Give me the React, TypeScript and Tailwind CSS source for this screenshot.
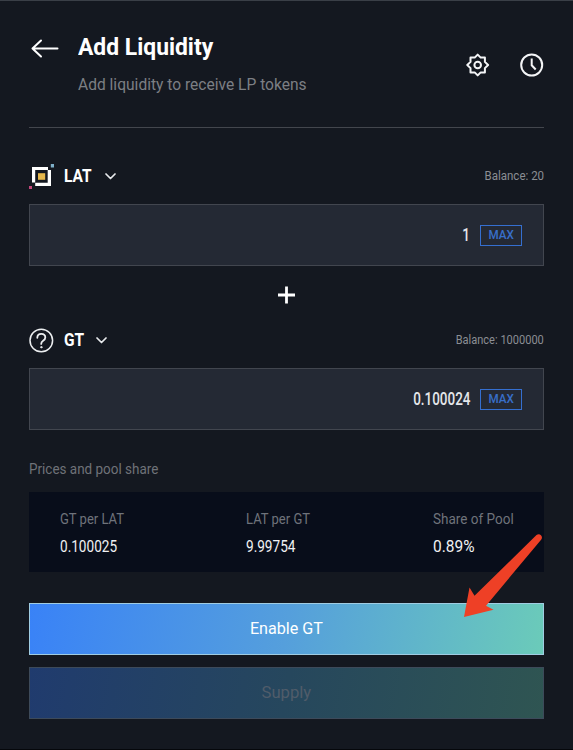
import React from "react";

function ArrowLeft() {
  return (
    <svg className="mt-[38px] h-[20px] w-[28px] shrink-0" viewBox="0 0 28 20" fill="none" stroke="#fff" strokeWidth="2" strokeLinecap="round" strokeLinejoin="round">
      <path d="M26.500 9.500H1.500M10 1.500l-8.500 8 8.500 8" />
    </svg>
  );
}

function Gear() {
  return (
    <svg className="h-6 w-6" viewBox="0 0 24 24" fill="none" stroke="#f4f5f7" strokeWidth="2" strokeLinejoin="round">
      <path d="M11.700 1.600l3 3h4.200v4.300l3.200 3.100-3.200 3.100v4.300h-4.200l-3 3-3-3H4.500v-4.300L1.300 12l3.200-3.100V4.600h4.200z" />
      <circle cx="11.700" cy="12" r="3.300" />
    </svg>
  );
}

function Clock() {
  return (
    <svg className="h-6 w-6" viewBox="0 0 24 24" fill="none" stroke="#f4f5f7" strokeWidth="2">
      <circle cx="11.700" cy="12" r="10.500" />
      <path d="M11.700 5.500v6.800l4 4.200" />
    </svg>
  );
}

function LatLogo() {
  return (
    <svg className="-mt-px h-[26px] w-[27px] shrink-0" viewBox="0 0.5 27 26">
      <path d="M3 4.500h16v3H6.200v12.500H3z" fill="#fff" />
      <path d="M22 7.500V23.500H6.200V20.300h12.500V7.500z" fill="#fff" />
      <path d="M9 10.700h7.200v6.600H9z" fill="#e6b84c" />
      <path d="M21.800 1.500h3.200v3.500h-3.200z" fill="#7fb0c9" />
      <path d="M0 23.500h3v3H0z" fill="#c3477b" />
    </svg>
  );
}

function QuestionLogo() {
  return (
    <svg className="h-[27px] w-[27px] shrink-0" viewBox="0 0 27 27" fill="none" stroke="#eceef0" strokeWidth="1.500" strokeLinecap="round">
      <circle cx="12.300" cy="13.500" r="11.300" />
      <path d="M8.300 10.800c0-2.300 1.700-3.900 4-3.900s4 1.500 4 3.600c0 1.700-1 2.500-2.200 3.300-1.200.8-1.900 1.500-1.900 3.100" strokeWidth="1.800" />
      <circle cx="12.300" cy="20.200" r=".7" fill="#eceef0" strokeWidth="1" />
    </svg>
  );
}

function Chevron() {
  return (
    <svg className="h-[7px] w-[11px]" viewBox="0 0 11 7" fill="none" stroke="#e8eaed" strokeWidth="1.700" strokeLinecap="round" strokeLinejoin="round">
      <path d="M1 1l4.500 4.500L10 1" />
    </svg>
  );
}

type TokenProps = { logo: React.ReactNode; symbol: string; symbolClass: string; balance: string; balanceClass: string };

function TokenRow({ logo, symbol, symbolClass, balance, balanceClass }: TokenProps) {
  return (
    <div className="flex h-[26px] items-center justify-between">
      <div className="flex items-center">
        {logo}
        <span className={"ml-[8px] text-[18px] leading-[26px] font-bold text-white " + symbolClass}>
          <span className="inline-block origin-left scale-x-[0.86]">{symbol}</span>
        </span>
        <Chevron />
      </div>
      <span className={"origin-right text-[12px] leading-[26px] text-[#8b8e94] " + balanceClass}>{balance}</span>
    </div>
  );
}

function AmountBox({ value }: { value: string }) {
  return (
    <div className="flex h-[62px] items-center justify-end border border-[#42464f] bg-[#242934] pr-[21px]">
      <span className="origin-right scale-x-[0.77] text-[17.5px] leading-6 font-medium text-[#e4e6ea]">{value}</span>
      <span className="ml-[10px] flex h-[21px] w-[42px] items-center justify-center border border-[#356fd0] text-[12px] leading-none font-medium text-[#386fca]">
        <span className="scale-x-[0.97]">MAX</span>
      </span>
    </div>
  );
}

function Stat({ label, labelClass, value, valueClass, className }: { label: string; labelClass: string; value: string; valueClass: string; className: string }) {
  return (
    <div className={"flex flex-col whitespace-nowrap " + className}>
      <span className={"origin-left text-[14px] leading-[26px] text-[#6f737b] " + labelClass}>{label}</span>
      <span className={"origin-left text-[17px] leading-[28px] text-[#f0f1f3] " + valueClass}>{value}</span>
    </div>
  );
}

export default function App() {
  return (
    <div className="relative flex h-[750px] w-[573px] flex-col overflow-hidden border-t border-b border-t-[#3a3f47] border-b-[#05070b] bg-[#141820] px-[29px] font-['Roboto','Liberation_Sans',sans-serif]">
      <header className="flex h-[127px] shrink-0 border-b border-[#43464d] pl-[2px]">
        <ArrowLeft />
        <div className="ml-[19px] flex flex-col pt-[30px] whitespace-nowrap">
          <h1 className="origin-left scale-x-[0.953] text-[24px] leading-8 font-bold text-white">Add Liquidity</h1>
          <p className="mt-[9px] origin-left scale-x-[0.916] text-[17px] leading-6 text-[#7c7f84]">Add liquidity to receive LP tokens</p>
        </div>
        <div className="ml-auto flex gap-[30px] pt-[52px]">
          <Gear />
          <Clock />
        </div>
      </header>

      <div className="mt-[35px] flex flex-col">
        <TokenRow logo={<LatLogo />} symbol="LAT" symbolClass="w-[41px]" balance="Balance: 20" balanceClass="scale-x-[0.96]" />
      </div>
      <div className="mt-[15px]">
        <AmountBox value="1" />
      </div>
      <div className="flex h-[61px] items-center justify-center pb-[4px]">
        <svg className="h-[18px] w-[18px]" viewBox="0 0 18 18" stroke="#fff" strokeWidth="2.800">
          <path d="M8.500 .5v17M0 9h17" />
        </svg>
      </div>
      <TokenRow logo={<QuestionLogo />} symbol="GT" symbolClass="w-[32px]" balance="Balance: 1000000" balanceClass="scale-x-[0.92]" />
      <div className="mt-[15px]">
        <AmountBox value="0.100024" />
      </div>

      <p className="mt-[26px] origin-left scale-x-[0.962] text-[14px] leading-[26px] text-[#6f7278]">Prices and pool share</p>
      <div className="mt-[10px] flex h-[80px] shrink-0 bg-[#080d1a] pt-[14px] pl-[31px]">
        <Stat label="GT per LAT" labelClass="scale-x-[0.93]" value="0.100025" valueClass="scale-x-[0.8]" className="w-[186px]" />
        <Stat label="LAT per GT" labelClass="scale-x-[0.93]" value="9.99754" valueClass="scale-x-[0.8]" className="w-[187px]" />
        <Stat label="Share of Pool" labelClass="scale-x-[0.965]" value="0.89%" valueClass="scale-x-[0.91]" className="" />
      </div>

      <button className="mt-[31px] h-[52px] shrink-0 border border-[#a0cce2] bg-linear-[100deg,#3982f7,#559fdc_50%,#6bcbb9] bg-origin-border text-[17px] text-white">
        <span className="inline-block scale-x-[0.95]">Enable GT</span>
      </button>
      <button className="mt-[12px] h-[52px] shrink-0 border border-[#3d4a5a] bg-linear-[100deg,#203b6e,#26475d_50%,#2f5552] bg-origin-border text-[17px] text-[#505c6a]">
        <span className="inline-block scale-x-[0.98]">Supply</span>
      </button>

      <svg className="absolute top-[532px] left-[463px] h-[88px] w-[80px]" viewBox="0 0 80 88" fill="#ee4026">
        <path d="M1 84L6.500 54.500l5 8.300L73.500 2c3-2.500 7 1 4.800 4.500L23 72.700l7.500 4.100z" />
      </svg>
    </div>
  );
}
